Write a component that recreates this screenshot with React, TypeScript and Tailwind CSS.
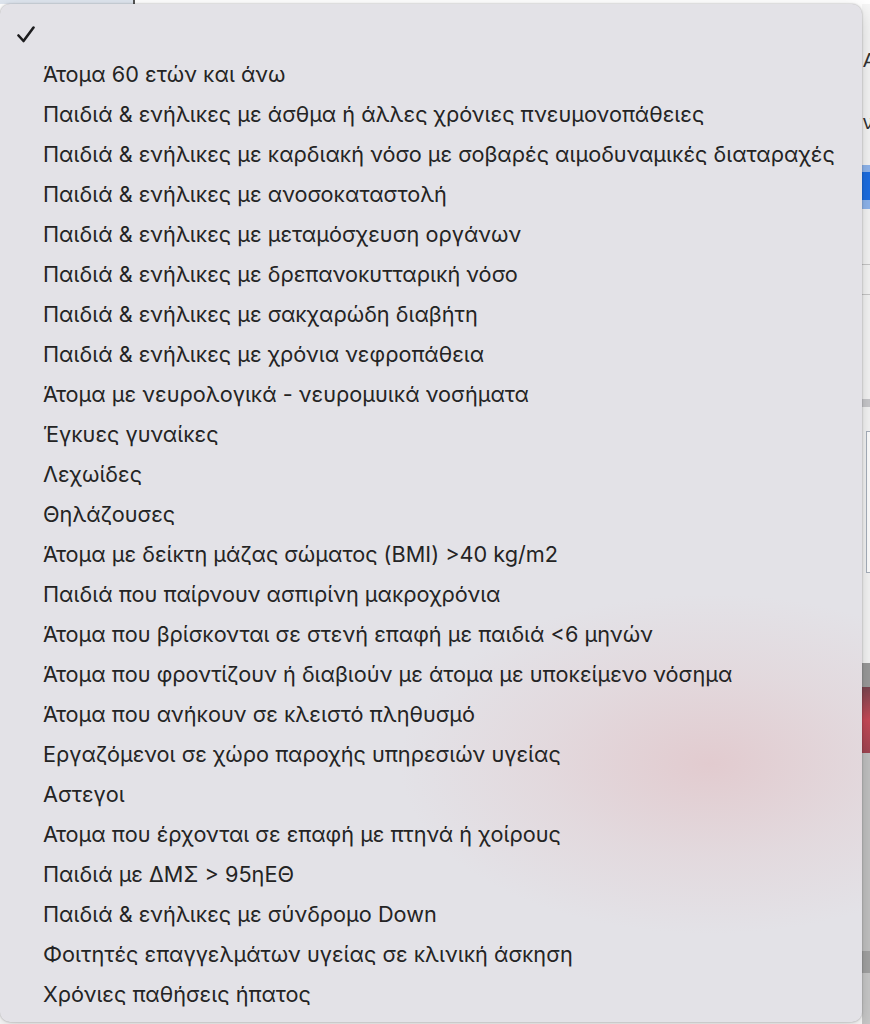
import React from 'react';

const items: string[] = [
  'Άτομα 60 ετών και άνω',
  'Παιδιά & ενήλικες με άσθμα ή άλλες χρόνιες πνευμονοπάθειες',
  'Παιδιά & ενήλικες με καρδιακή νόσο με σοβαρές αιμοδυναμικές διαταραχές',
  'Παιδιά & ενήλικες με ανοσοκαταστολή',
  'Παιδιά & ενήλικες με μεταμόσχευση οργάνων',
  'Παιδιά & ενήλικες με δρεπανοκυτταρική νόσο',
  'Παιδιά & ενήλικες με σακχαρώδη διαβήτη',
  'Παιδιά & ενήλικες με χρόνια νεφροπάθεια',
  'Άτομα με νευρολογικά - νευρομυικά νοσήματα',
  'Έγκυες γυναίκες',
  'Λεχωίδες',
  'Θηλάζουσες',
  'Άτομα με δείκτη μάζας σώματος (BMI) >40 kg/m2',
  'Παιδιά που παίρνουν ασπιρίνη μακροχρόνια',
  'Άτομα που βρίσκονται σε στενή επαφή με παιδιά <6 μηνών',
  'Άτομα που φροντίζουν ή διαβιούν με άτομα με υποκείμενο νόσημα',
  'Άτομα που ανήκουν σε κλειστό πληθυσμό',
  'Εργαζόμενοι σε χώρο παροχής υπηρεσιών υγείας',
  'Αστεγοι',
  'Ατομα που έρχονται σε επαφή με πτηνά ή χοίρους',
  'Παιδιά με ΔΜΣ > 95ηΕΘ',
  'Παιδιά & ενήλικες με σύνδρομο Down',
  'Φοιτητές επαγγελμάτων υγείας σε κλινική άσκηση',
  'Χρόνιες παθήσεις ήπατος',
];

// page peeking out behind the popup
const Backdrop: React.FC = () => (
  <div className="flex flex-col h-full">
    <div className="flex h-[4px] shrink-0">
      <div className="w-[135px] bg-[#dfe6ef] border-r-2 border-[#555]" />
      <div className="flex-1 bg-white" />
    </div>
    <div className="flex flex-1">
      <div className="flex-1" />
      <div className="w-[8px] flex flex-col bg-[#f6f6f6] text-[20px] text-[#333] font-['Liberation_Sans',sans-serif] leading-none overflow-hidden">
        <div className="h-[46px]" />
        <div className="pl-[1px]">Α</div>
        <div className="h-[42px]" />
        <div className="pl-[1px]">ν</div>
        <div className="h-[33px]" />
        <div className="h-[7px] bg-[#8fb6ee]" />
        <div className="h-[28px] bg-[#1b6ee3]" />
        <div className="h-[9px] bg-[#8fb6ee]" />
        <div className="h-[56px] border-b border-[#c8c8c8]" />
        <div className="h-[30px] border-b border-[#c8c8c8]" />
        <div className="h-[104px]" />
        <div className="h-[8px] bg-[#c9c9cc]" />
        <div className="h-[24px]" />
        <div className="h-[142px] ml-[4px] border-l border-t border-b border-[#a9b1bd] bg-white" />
        <div className="h-[90px]" />
        <div className="h-[24px] bg-[#9b9b9b]" />
        <div className="h-[66px] bg-gradient-to-b from-[#7c4550] via-[#c84a58] to-[#a14552]" />
        <div className="h-[198px] bg-[#c2c2c2]" />
        <div className="h-[22px] bg-[#a3a3a3]" />
        <div className="flex-1 bg-[#c9c9c9]" />
      </div>
    </div>
  </div>
);

const Check: React.FC = () => (
  <svg width="18" height="17" viewBox="0 0 18 17" fill="none">
    <path d="M1.5 9.5 L6.5 15 L16.5 1.5" stroke="#1d1d1f" strokeWidth="2.6" strokeLinecap="round" strokeLinejoin="round" />
  </svg>
);

export default function App() {
  return (
    <div className="relative w-[870px] h-[1024px] overflow-hidden bg-white">
      <Backdrop />

      <div className="absolute left-0 top-[4px] w-[862px] h-[1018px] rounded-[10px] bg-[#e3e2e7] shadow-[0_0_2px_rgba(0,0,0,0.35),0_6px_18px_rgba(0,0,0,0.18)] overflow-hidden">
        {/* vibrancy tint from the red photo underneath */}
        <div className="absolute left-[400px] top-[590px] w-[620px] h-[340px] rounded-full bg-[radial-gradient(closest-side,rgba(226,202,206,0.95),rgba(226,210,214,0.55)_55%,rgba(227,226,231,0))]" />

        <div className="relative flex flex-col pt-[10px] text-[21.7px] text-[#242424] font-['Inter','Noto_Sans',sans-serif]">
          <div className="h-[40px] flex items-center pl-[17px]">
            <Check />
          </div>
          {items.map(label => (
            <div key={label} className="h-[40px] flex items-center pl-[43px] whitespace-nowrap">
              {label}
            </div>
          ))}
        </div>
      </div>
    </div>
  );
}
